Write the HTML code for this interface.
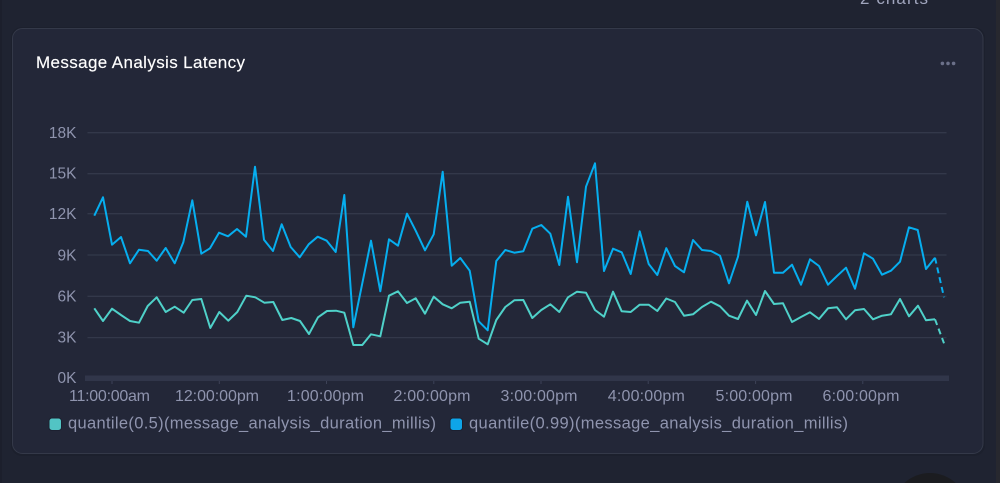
<!DOCTYPE html>
<html>
<head>
<meta charset="utf-8">
<style>
html,body{margin:0;padding:0;background:#1f2331;width:1000px;height:483px;overflow:hidden}
svg{display:block;position:absolute;left:0;top:0;overflow:hidden}
text{font-family:"Liberation Sans",sans-serif}
</style>
</head>
<body>
<svg width="1000" height="483" viewBox="0 0 1000 483" xmlns="http://www.w3.org/2000/svg">
<rect width="1000" height="483" fill="#1f2331"/>
<rect x="0" y="0" width="2" height="483" fill="#1c1f2c"/>
<rect x="996" y="0" width="4" height="483" fill="#27282f"/>
<path d="M904.3 483A38 38 0 0 1 955.7 483Z" fill="#1b1c20"/>
<text x="860" y="4" font-size="17" fill="#a0a5bd" textLength="68" lengthAdjust="spacing">2 charts</text>
<rect x="11" y="27" width="974" height="429" rx="11" fill="#14161f" opacity=".2"/>
<rect x="12.5" y="28.5" width="970.5" height="425" rx="10" fill="#232738" stroke="#343949" stroke-width="1"/>
<text x="36" y="68" font-size="17" fill="#ffffff" stroke="#ffffff" stroke-width=".15" textLength="209" lengthAdjust="spacing">Message Analysis Latency</text>
<circle cx="942.4" cy="63.4" r="1.8" fill="#6b7089"/><circle cx="948" cy="63.4" r="1.8" fill="#6b7089"/><circle cx="953.6" cy="63.4" r="1.8" fill="#6b7089"/>
<g stroke="#33384a" stroke-width="1.3" fill="none">
<path d="M87.5 132.7H946.5M87.5 173.7H946.5M87.5 213.7H946.5M87.5 255H946.5M87.5 296.3H946.5M87.5 337.6H946.5"/>
</g>
<rect x="85" y="375.5" width="864" height="5.5" fill="#31364a"/>
<path d="M112 381v3M219.3 381v3M326.5 381v3M433.8 381v3M541 381v3M648.2 381v3M755.6 381v3M862.8 381v3" stroke="#3d4257" stroke-width="1"/>
<g font-size="15.5" fill="#8f94ae" text-anchor="end">
<text x="76.5" y="137.8">18K</text>
<text x="76.5" y="178.6">15K</text>
<text x="76.5" y="219">12K</text>
<text x="76.5" y="260.4">9K</text>
<text x="76.5" y="301.4">6K</text>
<text x="76.5" y="342.6">3K</text>
<text x="76.5" y="383">0K</text>
</g>
<g font-size="16" fill="#8f94ae">
<text x="69" y="401" textLength="81" lengthAdjust="spacing">11:00:00am</text>
<text x="175" y="401" textLength="84" lengthAdjust="spacing">12:00:00pm</text>
<text x="287" y="401" textLength="77" lengthAdjust="spacing">1:00:00pm</text>
<text x="393.5" y="401" textLength="77" lengthAdjust="spacing">2:00:00pm</text>
<text x="500.5" y="401" textLength="77" lengthAdjust="spacing">3:00:00pm</text>
<text x="607.8" y="401" textLength="77" lengthAdjust="spacing">4:00:00pm</text>
<text x="715.5" y="401" textLength="77" lengthAdjust="spacing">5:00:00pm</text>
<text x="822.5" y="401" textLength="77" lengthAdjust="spacing">6:00:00pm</text>
</g>
<rect x="49" y="418" width="12.5" height="12.5" rx="3" fill="#52c4c4" stroke="#1c2030" stroke-width="1"/>
<text x="68" y="428.5" font-size="16.5" fill="#8f94ae" textLength="368" lengthAdjust="spacing">quantile(0.5)(message_analysis_duration_millis)</text>
<rect x="450" y="418" width="12.5" height="12.5" rx="3" fill="#0ea5e9" stroke="#1c2030" stroke-width="1"/>
<text x="469" y="428.5" font-size="16.5" fill="#8f94ae" textLength="379" lengthAdjust="spacing">quantile(0.99)(message_analysis_duration_millis)</text>
<g fill="none" stroke-width="2" stroke-linejoin="round">
<path stroke="#4fd1c9" d="M94.3 308.3L103 321L112 308.7L121 315L130 321L139 322.7L147.7 306L156.7 297.3L165.7 312L174.7 306.7L183.7 312.7L192.3 300L201.3 299L210.3 328L219.3 312L228.3 320.7L237.3 312L246.3 295.7L255.3 297.3L264.3 302.7L273.3 302L282.3 320L291.3 318L300 321L309 334L318 317.3L327 311L336 310.7L344.3 312.7L353.3 345L362.3 345L371 334.3L380.3 336.3L389 295.7L398 291.3L407 303L415.7 298.3L425 313.7L433.7 296.7L442.7 304.3L451.7 308.3L460.3 302.7L469.7 301.7L478.7 338.7L487.7 344.3L496.3 320L505.3 307L514.3 300.3L523.3 300L532.3 318L541.3 310L550.3 304.3L559.3 312L568 297.3L577 291.7L586 292.7L595 310L604 316.7L613 291.7L621.7 311.3L630.7 312L639.7 304.7L648.7 304.7L657.3 311L666.3 298.5L675 302L684 315.7L693 314.3L702 307L711 301.7L720 306.3L729 315.7L738 319L747 300.7L756 315L765 291L774 304L783 303.3L792 322L801 317L810 312.3L819 319L828 308.3L837 307.3L846 319.3L855 310.3L864 309L873 319.3L882 315.7L891 314.3L900 299L909 316.3L918 305.7L926 320.3L935 319.3"/>
<path stroke="#4fd1c9" stroke-dasharray="6 4" d="M935 319.3L944 343.3"/>
<path stroke="#06aeef" d="M94.3 215.7L103 197.3L112 244.7L121 237L130 263.3L139 249.7L148 251L156.7 260.7L165.7 248L174.7 263.3L183.3 242.3L192.3 200.3L201.3 253.7L210 248.3L219 232.7L228 236.3L237 229L246 236.7L255 166.7L264 239.7L273 251L281.7 224.3L290.7 247L299.7 257.3L308.7 244.3L317.7 236.7L326.7 240.7L335.7 252L344.3 195L353.3 327.3L362.3 283.3L371 240.7L380.3 291.3L389 239.3L398 245.7L407 213.7L415.7 230.7L425 250.3L433.7 234.3L442.7 171.7L451.7 265.7L460.3 258L469.7 270.7L478.7 321.3L487.7 330.3L496.3 261L505.3 250L514.3 252.7L523.3 251.3L532.3 228.7L541.3 225L550.3 233.7L559.3 265L568 196.7L577 262.3L586 186.7L595 163.3L604 271L613 248.7L621.7 252.3L630.7 274L639.7 231.3L648.7 264L657.3 275L666.3 248.2L675 266L684 272.3L693 240L702 250L711 251L720 255.7L729 283.3L738 256.7L747.3 201.7L756 235.3L765 202L774 272.7L783 272.7L792 264.7L801 284.7L810 259.3L819 266L828 284.7L837 276L846 267.7L855 288.7L864 253.3L873 258.7L882 274.7L891 270.7L900 261.7L909 227.3L917.7 230L926 269L935 257.7"/>
<path stroke="#06aeef" stroke-dasharray="6 4" d="M935 257.7L944 297.3"/>
</g>
</svg>
</body>
</html>
